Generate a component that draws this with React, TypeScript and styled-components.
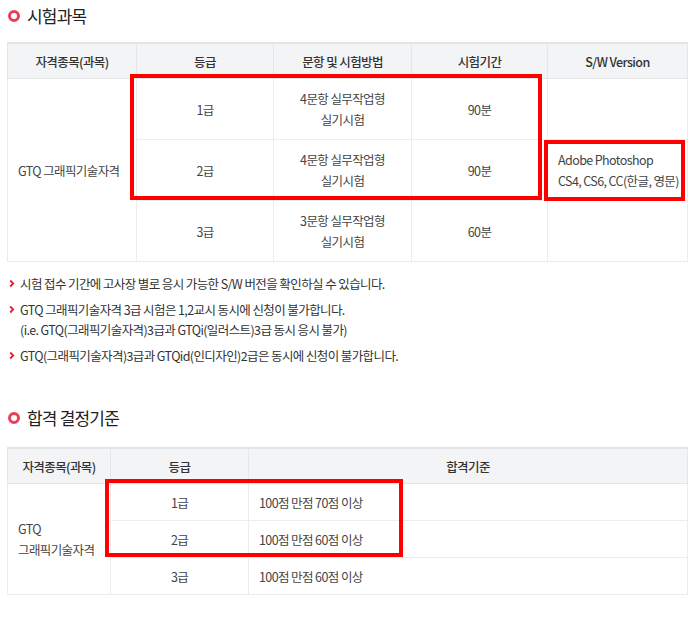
import styled, { createGlobalStyle } from 'styled-components';

const GlobalStyle = createGlobalStyle`
  body {
    margin: 0;
    background: #fff;
    font-family: "Noto Sans CJK KR", "Noto Sans", sans-serif;
    color: #444;
  }
`;

const Page = styled.div`
  width: 681px;
  padding: 4px 0 0 7px;
`;

const Section = styled.section<{ $gap?: number }>`
  margin-top: ${(p) => p.$gap ?? 0}px;
`;

const Title = styled.h2<{ $below?: number }>`
  display: flex;
  align-items: center;
  gap: 7px;
  margin: 0 0 ${(p) => p.$below ?? 14}px 1px;
  font-size: 17px;
  font-weight: 400;
  line-height: 24px;
  letter-spacing: -0.8px;
  color: #222;
`;

const Ring = styled.span`
  width: 12px;
  height: 12px;
  box-sizing: border-box;
  border: 3.5px solid #e8405a;
  border-radius: 50%;
`;

const TableWrap = styled.div`
  position: relative;
`;

const Table = styled.table`
  width: 100%;
  border-collapse: collapse;
  table-layout: fixed;
  font-size: 12.5px;
  letter-spacing: -0.6px;
`;

const Th = styled.th<{ $w?: number }>`
  width: ${(p) => (p.$w ? `${p.$w}px` : 'auto')};
  height: 34px;
  padding: 0;
  background: #f3f4f6;
  border: 1px solid #e6e6e6;
  border-top: 2px solid #e3e4e6;
  font-weight: 500;
  color: #333;
  text-align: center;
`;

const Td = styled.td<{ $h: number; $left?: boolean }>`
  height: ${(p) => p.$h}px;
  padding: 0 10px;
  border: 1px solid #ececec;
  text-align: ${(p) => (p.$left ? 'left' : 'center')};
  vertical-align: middle;
  line-height: 21px;
  white-space: nowrap;
  color: #444;
`;

const Highlight = styled.div<{ $x: number; $y: number; $w: number; $h: number }>`
  position: absolute;
  left: ${(p) => p.$x}px;
  top: ${(p) => p.$y}px;
  width: ${(p) => p.$w}px;
  height: ${(p) => p.$h}px;
  box-sizing: border-box;
  border: 4px solid #ff0000;
  pointer-events: none;
`;

const Notes = styled.ul`
  list-style: none;
  margin: 12px 0 0;
  padding: 0;
  font-size: 12.5px;
  letter-spacing: -0.6px;
  color: #333;
`;

const Note = styled.li`
  display: flex;
  gap: 5px;
  line-height: 20px;
  margin-bottom: 6px;
`;

const Chevron = () => (
  <svg width="6" height="20" viewBox="0 0 6 20" style={{ flex: 'none', marginLeft: 2 }}>
    <path d="M1.2 6.5 L4.2 9.5 L1.2 12.5" fill="none" stroke="#e0203c" strokeWidth="1.8" />
  </svg>
);

const subjectRows = [
  { grade: '1급', method: ['4문항 실무작업형', '실기시험'], time: '90분' },
  { grade: '2급', method: ['4문항 실무작업형', '실기시험'], time: '90분' },
  { grade: '3급', method: ['3문항 실무작업형', '실기시험'], time: '60분' },
];

const passRows = [
  { grade: '1급', rule: '100점 만점 70점 이상' },
  { grade: '2급', rule: '100점 만점 60점 이상' },
  { grade: '3급', rule: '100점 만점 60점 이상' },
];

export default function App() {
  return (
    <Page>
      <GlobalStyle />
      <Section>
        <Title>
          <Ring />
          시험과목
        </Title>
        <TableWrap>
          <Table>
            <thead>
              <tr>
                <Th $w={128}>자격종목(과목)</Th>
                <Th $w={136}>등급</Th>
                <Th $w={137}>문항 및 시험방법</Th>
                <Th $w={135}>시험기간</Th>
                <Th>S/W Version</Th>
              </tr>
            </thead>
            <tbody>
              {subjectRows.map((row, i) => (
                <tr key={row.grade}>
                  {i === 0 && (
                    <Td $h={60} $left rowSpan={3}>
                      GTQ 그래픽기술자격
                    </Td>
                  )}
                  <Td $h={60}>{row.grade}</Td>
                  <Td $h={60}>
                    {row.method[0]}
                    <br />
                    {row.method[1]}
                  </Td>
                  <Td $h={60}>{row.time}</Td>
                  <Td $h={60} $left>
                    {i === 1 && (
                      <>
                        Adobe Photoshop
                        <br />
                        CS4, CS6, CC(한글, 영문)
                      </>
                    )}
                  </Td>
                </tr>
              ))}
            </tbody>
          </Table>
          <Highlight $x={123} $y={32} $w={412} $h={126} />
          <Highlight $x={537} $y={98} $w={141} $h={61} />
        </TableWrap>
        <Notes>
          <Note>
            <Chevron />
            <span>시험 접수 기간에 고사장 별로 응시 가능한 S/W 버전을 확인하실 수 있습니다.</span>
          </Note>
          <Note>
            <Chevron />
            <span>
              GTQ 그래픽기술자격 3급 시험은 1,2교시 동시에 신청이 불가합니다.
              <br />
              (i.e. GTQ(그래픽기술자격)3급과 GTQi(일러스트)3급 동시 응시 불가)
            </span>
          </Note>
          <Note>
            <Chevron />
            <span>GTQ(그래픽기술자격)3급과 GTQid(인디자인)2급은 동시에 신청이 불가합니다.</span>
          </Note>
        </Notes>
      </Section>

      <Section $gap={40}>
        <Title $below={17}>
          <Ring />
          합격 결정기준
        </Title>
        <TableWrap>
          <Table>
            <thead>
              <tr>
                <Th $w={102}>자격종목(과목)</Th>
                <Th $w={137}>등급</Th>
                <Th>합격기준</Th>
              </tr>
            </thead>
            <tbody>
              {passRows.map((row, i) => (
                <tr key={row.grade}>
                  {i === 0 && (
                    <Td $h={36} $left rowSpan={3}>
                      GTQ
                      <br />
                      그래픽기술자격
                    </Td>
                  )}
                  <Td $h={36}>{row.grade}</Td>
                  <Td $h={36} $left>
                    {row.rule}
                  </Td>
                </tr>
              ))}
            </tbody>
          </Table>
          <Highlight $x={98} $y={32} $w={298} $h={78} />
        </TableWrap>
      </Section>
    </Page>
  );
}
